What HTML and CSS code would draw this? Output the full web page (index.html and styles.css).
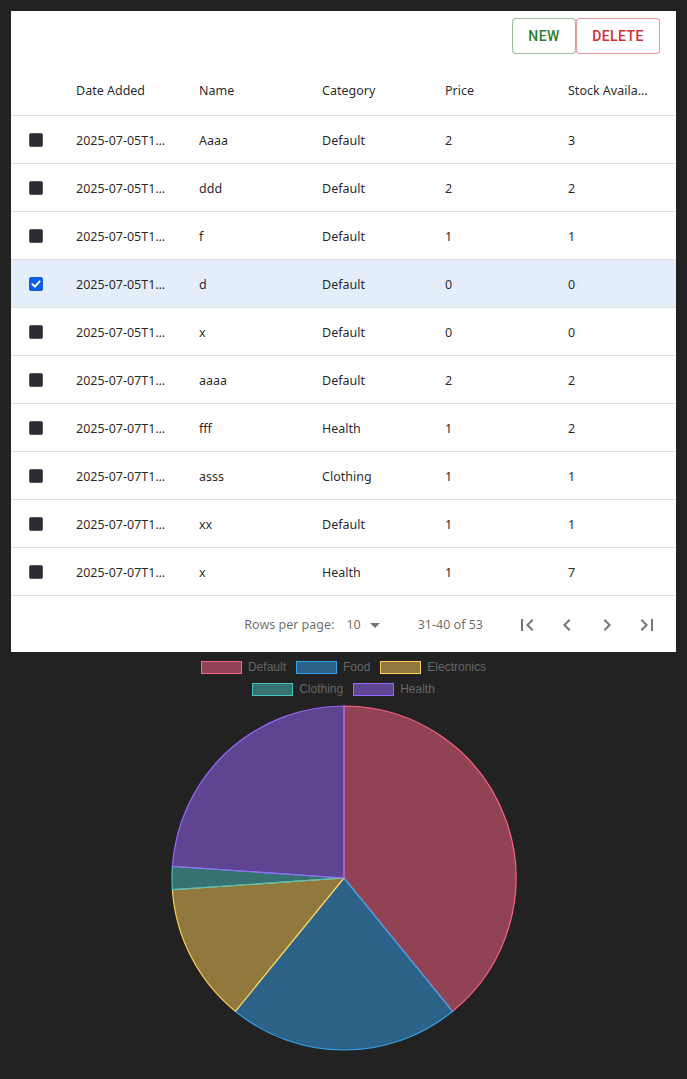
FILE: index.html
```html
<!DOCTYPE html>
<html>
<head>
<meta charset="utf-8">
<link rel="stylesheet" href="styles.css">
</head>
<body>
<div class="panel">
  <div class="toolbar">
    <button class="btn btn-new">New</button>
    <button class="btn btn-delete">Delete</button>
  </div>
  <div class="grid">
    <div class="row head">
      <div class="cell cb"></div>
      <div class="cell">Date Added</div>
      <div class="cell">Name</div>
      <div class="cell">Category</div>
      <div class="cell">Price</div>
      <div class="cell">Stock Availa…</div>
    </div>
    <div class="row"><div class="cell cb"><span class="box"></span></div><div class="cell">2025-07-05T1…</div><div class="cell">Aaaa</div><div class="cell">Default</div><div class="cell">2</div><div class="cell">3</div></div>
    <div class="row"><div class="cell cb"><span class="box"></span></div><div class="cell">2025-07-05T1…</div><div class="cell">ddd</div><div class="cell">Default</div><div class="cell">2</div><div class="cell">2</div></div>
    <div class="row"><div class="cell cb"><span class="box"></span></div><div class="cell">2025-07-05T1…</div><div class="cell">f</div><div class="cell">Default</div><div class="cell">1</div><div class="cell">1</div></div>
    <div class="row selected"><div class="cell cb"><span class="box checked"><svg viewBox="0 0 14 14" width="14" height="14"><path d="M3.5 7.2 L6 9.6 L10.6 4.4" fill="none" stroke="#fff" stroke-width="2" stroke-linecap="round" stroke-linejoin="round"/></svg></span></div><div class="cell">2025-07-05T1…</div><div class="cell">d</div><div class="cell">Default</div><div class="cell">0</div><div class="cell">0</div></div>
    <div class="row"><div class="cell cb"><span class="box"></span></div><div class="cell">2025-07-05T1…</div><div class="cell">x</div><div class="cell">Default</div><div class="cell">0</div><div class="cell">0</div></div>
    <div class="row"><div class="cell cb"><span class="box"></span></div><div class="cell">2025-07-07T1…</div><div class="cell">aaaa</div><div class="cell">Default</div><div class="cell">2</div><div class="cell">2</div></div>
    <div class="row"><div class="cell cb"><span class="box"></span></div><div class="cell">2025-07-07T1…</div><div class="cell">fff</div><div class="cell">Health</div><div class="cell">1</div><div class="cell">2</div></div>
    <div class="row"><div class="cell cb"><span class="box"></span></div><div class="cell">2025-07-07T1…</div><div class="cell">asss</div><div class="cell">Clothing</div><div class="cell">1</div><div class="cell">1</div></div>
    <div class="row"><div class="cell cb"><span class="box"></span></div><div class="cell">2025-07-07T1…</div><div class="cell">xx</div><div class="cell">Default</div><div class="cell">1</div><div class="cell">1</div></div>
    <div class="row"><div class="cell cb"><span class="box"></span></div><div class="cell">2025-07-07T1…</div><div class="cell">x</div><div class="cell">Health</div><div class="cell">1</div><div class="cell">7</div></div>
  </div>
  <div class="footer">
    <span class="rpp">Rows per page:</span>
    <span class="select">10<svg class="drop" viewBox="0 0 24 24" width="24" height="24"><path d="M7 10l5 5 5-5z"/></svg></span>
    <span class="range">31-40 of 53</span>
    <div class="pager">
      <span class="pbtn"><svg viewBox="0 0 24 24" width="24" height="24"><path d="M18.41 16.59L13.82 12l4.59-4.59L17 6l-6 6 6 6zM6 6h2v12H6z"/></svg></span>
      <span class="pbtn"><svg viewBox="0 0 24 24" width="24" height="24"><path d="M15.41 16.59L10.83 12l4.58-4.59L14 6l-6 6 6 6 1.41-1.41z"/></svg></span>
      <span class="pbtn"><svg viewBox="0 0 24 24" width="24" height="24"><path d="M8.59 16.59L13.17 12 8.59 7.41 10 6l6 6-6 6-1.41-1.41z"/></svg></span>
      <span class="pbtn"><svg viewBox="0 0 24 24" width="24" height="24"><path d="M5.59 7.41L10.18 12l-4.59 4.59L7 18l6-6-6-6zM16 6h2v12h-2z"/></svg></span>
    </div>
  </div>
</div>
<div class="chart">
  <div class="legend">
    <div class="lrow">
      <span class="litem"><span class="lbox c-default"></span>Default</span>
      <span class="litem"><span class="lbox c-food"></span>Food</span>
      <span class="litem"><span class="lbox c-elec"></span>Electronics</span>
    </div>
    <div class="lrow">
      <span class="litem"><span class="lbox c-cloth"></span>Clothing</span>
      <span class="litem"><span class="lbox c-health"></span>Health</span>
    </div>
  </div>
  <svg class="pie" viewBox="0 0 350 350" width="350" height="350">
    <path d="M175 175 L175 3 A172 172 0 0 1 283.6 308.4 Z" fill="rgba(255,99,132,0.5)" stroke="rgb(255,99,132)" stroke-width="1.2"/>
    <path d="M175 175 L283.6 308.4 A172 172 0 0 1 66.4 308.4 Z" fill="rgba(54,162,235,0.5)" stroke="rgb(54,162,235)" stroke-width="1.2"/>
    <path d="M175 175 L66.4 308.4 A172 172 0 0 1 3.4 186.7 Z" fill="rgba(255,206,86,0.5)" stroke="rgb(255,206,86)" stroke-width="1.2"/>
    <path d="M175 175 L3.4 186.7 A172 172 0 0 1 3.4 163.3 Z" fill="rgba(75,192,192,0.5)" stroke="rgb(75,192,192)" stroke-width="1.2"/>
    <path d="M175 175 L3.4 163.3 A172 172 0 0 1 175 3 Z" fill="rgba(153,102,255,0.5)" stroke="rgb(153,102,255)" stroke-width="1.2"/>
  </svg>
</div>
</body>
</html>
```
FILE: styles.css
```css
html, body {
  margin: 0;
  background: #222222;
}
body {
  padding: 11px 11px 0;
  font-family: "Noto Sans", "Open Sans", sans-serif;
}
.panel {
  background: #fff;
  color: rgba(0,0,0,0.87);
}
.toolbar {
  height: 49px;
  display: flex;
  justify-content: flex-end;
  align-items: center;
  padding: 0 16px;
  box-sizing: border-box;
}
.btn {
  font-family: Roboto, sans-serif;
  font-weight: 500;
  font-size: 14px;
  letter-spacing: 0.4px;
  text-transform: uppercase;
  height: 36px;
  padding: 0 15px;
  background: #fff;
  border-radius: 4px;
  cursor: pointer;
  margin: 0;
}
.btn-new {
  color: #2e7d32;
  border: 1px solid rgba(46,125,50,0.5);
  width: 64px;
}
.btn-delete {
  color: #d32f2f;
  border: 1px solid rgba(211,47,47,0.5);
  width: 84px;
}
.row {
  display: grid;
  grid-template-columns: 55px 123px 123px 123px 123px 1fr;
  height: 48px;
  border-bottom: 1px solid #e0e0e0;
  box-sizing: border-box;
  align-items: center;
  font-size: 12.5px;
  padding-top: 1px;
}
.row.head {
  height: 56px;
  padding-top: 5px;
}
.row.selected {
  background: rgba(25,118,210,0.12);
}
.cell {
  padding-left: 10px;
  white-space: nowrap;
  overflow: hidden;
}
.cell.cb {
  padding-left: 18px;
  display: flex;
  align-items: center;
}
.box {
  width: 14px;
  height: 14px;
  box-sizing: border-box;
  background: #2b2a33;
  border: 1px solid #55545c;
  border-radius: 2px;
  display: block;
}
.box.checked {
  background: #0b5fe0;
  border-color: #0b5fe0;
  position: relative;
}
.box.checked svg {
  position: absolute;
  left: -1px;
  top: -1px;
}
.footer {
  height: 56px;
  display: flex;
  align-items: center;
  justify-content: flex-end;
  padding-right: 9px;
  padding-top: 1px;
  box-sizing: border-box;
  font-size: 12.5px;
  color: rgba(0,0,0,0.6);
}
.rpp {
  margin-right: 12px;
}
.select {
  display: flex;
  align-items: center;
  color: rgba(0,0,0,0.6);
  margin-right: 31px;
}
.drop {
  fill: rgba(0,0,0,0.54);
  margin-left: 2px;
}
.range {
  margin-right: 24px;
}
.pager {
  display: flex;
}
.pbtn {
  width: 40px;
  height: 40px;
  display: flex;
  align-items: center;
  justify-content: center;
}
.pbtn svg {
  fill: rgba(0,0,0,0.54);
}
.chart {
  display: flex;
  flex-direction: column;
  align-items: center;
  padding-top: 4px;
}
.legend {
  font-family: "Liberation Sans", Arial, sans-serif;
  font-size: 12px;
  color: #666;
}
.lrow {
  height: 22px;
  display: flex;
  justify-content: center;
  align-items: center;
  gap: 10px;
}
.litem {
  display: flex;
  align-items: center;
  gap: 6px;
}
.lbox {
  width: 41px;
  height: 13px;
  box-sizing: border-box;
  border: 1px solid;
}
.c-default { background: rgba(255,99,132,0.5); border-color: rgb(255,99,132); }
.c-food { background: rgba(54,162,235,0.5); border-color: rgb(54,162,235); }
.c-elec { background: rgba(255,206,86,0.5); border-color: rgb(255,206,86); }
.c-cloth { background: rgba(75,192,192,0.5); border-color: rgb(75,192,192); }
.c-health { background: rgba(153,102,255,0.5); border-color: rgb(153,102,255); }
.pie {
  margin-top: 3px;
  display: block;
}
```
